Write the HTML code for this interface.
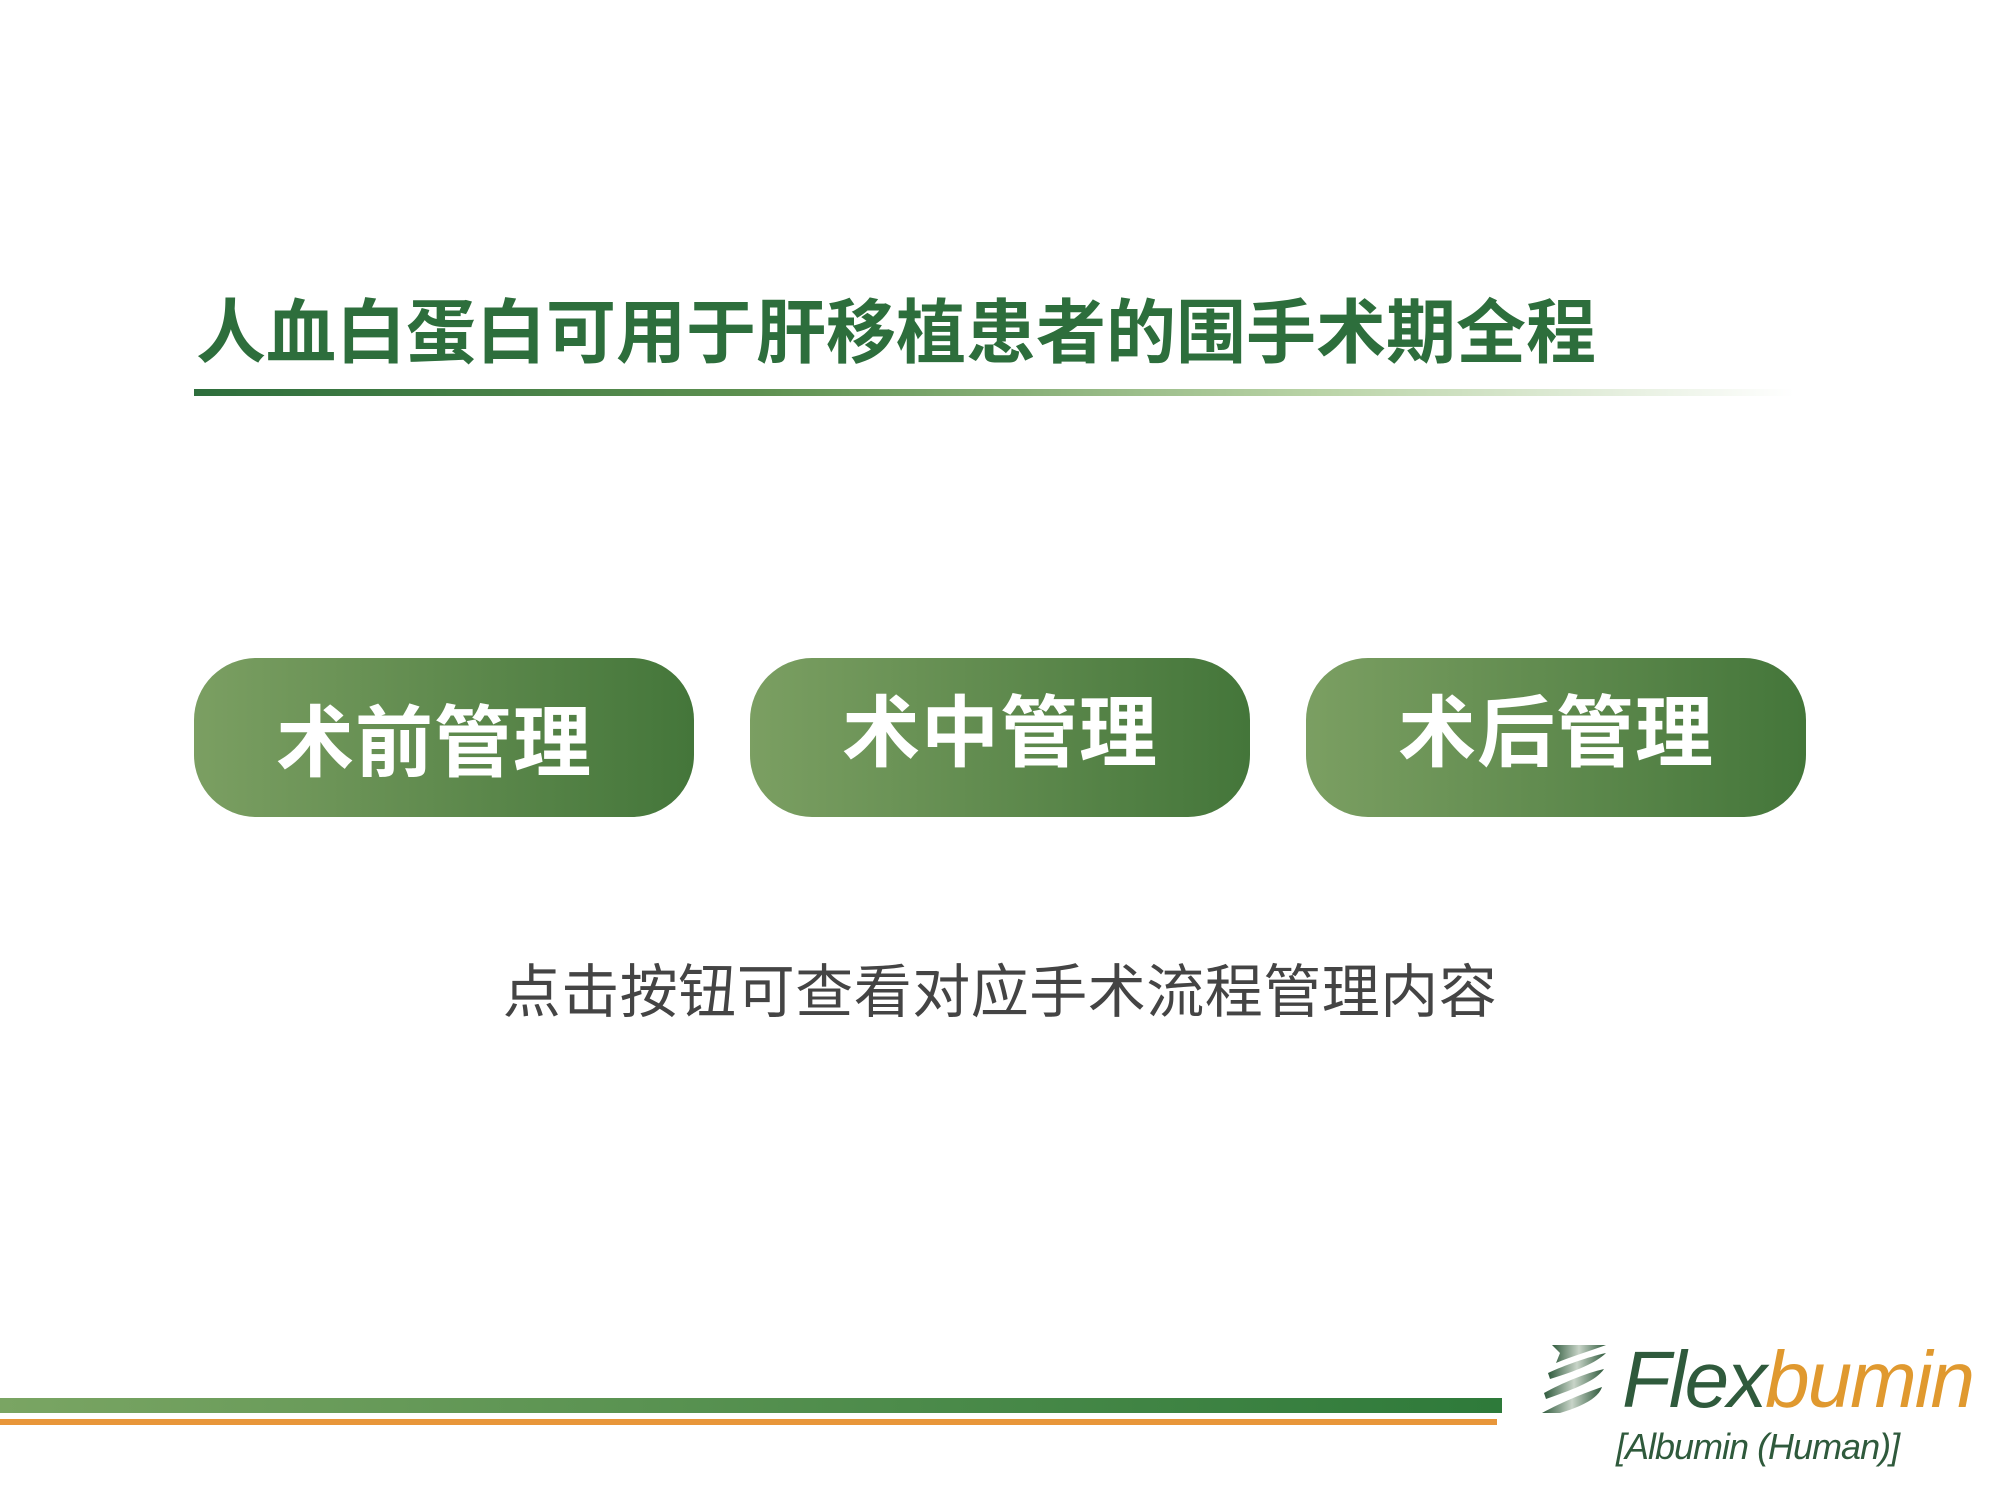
<!DOCTYPE html>
<html><head><meta charset="utf-8"><style>
body{margin:0;width:2000px;height:1500px;background:#fff;position:relative;overflow:hidden;font-family:"Liberation Sans","Noto Sans CJK SC",sans-serif}
.t{position:absolute;left:196px;top:288px;font-size:70px;font-weight:bold;color:#2d6e3c;letter-spacing:0px;white-space:nowrap;line-height:90px}
.ul{position:absolute;left:194px;top:389px;width:1600px;height:7px;background:linear-gradient(90deg,#2d6e3c 0%,#5d9050 35%,#b9d3a6 70%,rgba(255,255,255,0) 100%)}
.b{position:absolute;top:658px;width:500px;height:159px;border-radius:62px;background:linear-gradient(90deg,#7b9f62,#44763a);color:#fff;font-size:78px;font-weight:bold;text-align:center;line-height:159px;letter-spacing:1px}
.s{position:absolute;left:0;width:2000px;top:955px;text-align:center;font-size:58px;color:#444;line-height:76px;letter-spacing:0.5px}
.g{position:absolute;left:0;top:1398px;width:1502px;height:15px;background:linear-gradient(90deg,#7aa563,#2e7a3a)}
.o{position:absolute;left:0;top:1419px;width:1497px;height:6px;background:#e8963a}
.f{position:absolute;left:1622px;top:1330px;font-size:80px;font-style:italic;color:#2f5a3c;line-height:100px;letter-spacing:-2px}
.f span{color:#e0992f}
.a{position:absolute;left:1616px;top:1422px;font-size:36px;font-style:italic;color:#2f5a3c;line-height:50px;letter-spacing:-1px}
</style></head><body>
<div class="t">人血白蛋白可用于肝移植患者的围手术期全程</div>
<div class="ul"></div>
<div class="b" style="left:194px;line-height:170px;text-indent:-20px">术前管理</div>
<div class="b" style="left:750px;line-height:150px">术中管理</div>
<div class="b" style="left:1306px;line-height:150px">术后管理</div>
<div class="s">点击按钮可查看对应手术流程管理内容</div>
<div class="g"></div><div class="o"></div>
<svg style="position:absolute;left:1540px;top:1343px" width="72" height="72" viewBox="0 0 72 72">
<defs><linearGradient id="lg" x1="0" x2="1"><stop offset="0" stop-color="#2f5a3c"/><stop offset=".5" stop-color="#c8d4c8"/><stop offset="1" stop-color="#2f5a3c"/></linearGradient></defs>
<path d="M12 2H66C50 8 30 14 16 20L20 10Z" fill="url(#lg)"/>
<path d="M8 30C25 22 48 14 66 10C56 20 36 28 10 36Z" fill="url(#lg)"/>
<path d="M4 50C22 40 46 30 64 26C56 38 34 46 6 56Z" fill="url(#lg)"/>
<path d="M2 70C20 60 44 50 62 44C58 56 40 64 20 70Z" fill="url(#lg)"/>
</svg>
<div class="f">Flex<span>bumin</span></div>
<div class="a">[Albumin (Human)]</div>
</body></html>
